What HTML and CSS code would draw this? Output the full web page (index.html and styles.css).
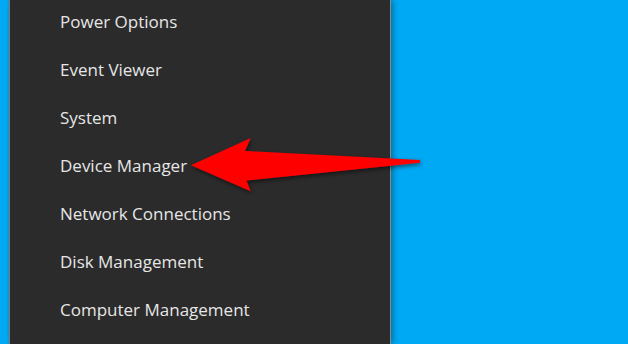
FILE: index.html
```html
<!DOCTYPE html>
<html>
<head>
<meta charset="utf-8">
<link rel="stylesheet" href="styles.css">
</head>
<body>
<div class="desktop">
  <nav class="menu">
    <ul class="items">
      <li class="item">Power Options</li>
      <li class="item">Event Viewer</li>
      <li class="item">System</li>
      <li class="item">Device Manager</li>
      <li class="item">Network Connections</li>
      <li class="item">Disk Management</li>
      <li class="item">Computer Management</li>
    </ul>
  </nav>
</div>
<svg class="arrow" width="628" height="344" viewBox="0 0 628 344">
  <defs>
    <filter id="sh" x="-20%" y="-50%" width="140%" height="200%">
      <feDropShadow dx="1" dy="2" stdDeviation="2" flood-color="#000" flood-opacity="0.55"/>
    </filter>
  </defs>
  <polygon filter="url(#sh)" fill="#ff0000" points="191,165.3 250.7,138 245,151 420,160 420,162.8 246.5,180.5 250.7,191.3"/>
</svg>
</body>
</html>
```

FILE: styles.css
```css
html, body {
  margin: 0;
  padding: 0;
  width: 628px;
  height: 344px;
  overflow: hidden;
}
body {
  background: #00a9f4;
  font-family: "Open Sans", "Noto Sans", sans-serif;
}
.desktop {
  display: flex;
  height: 344px;
  padding-left: 9px;
}
.menu {
  width: 380px;
  height: 344px;
  background: #2b2b2b;
  border-left: 1px solid #7a7a7a;
  border-right: 1px solid #8a8a8a;
  box-shadow: 2px 0 6px rgba(0, 0, 0, 0.35);
  overflow: hidden;
}
.items {
  list-style: none;
  margin: -2px 0 0 0;
  padding: 0;
}
.item {
  height: 48px;
  line-height: 48px;
  padding-left: 50px;
  color: #e6e6e6;
  font-size: 17px;
  white-space: nowrap;
}
.arrow {
  position: absolute;
  left: 0;
  top: 0;
  pointer-events: none;
}
```
